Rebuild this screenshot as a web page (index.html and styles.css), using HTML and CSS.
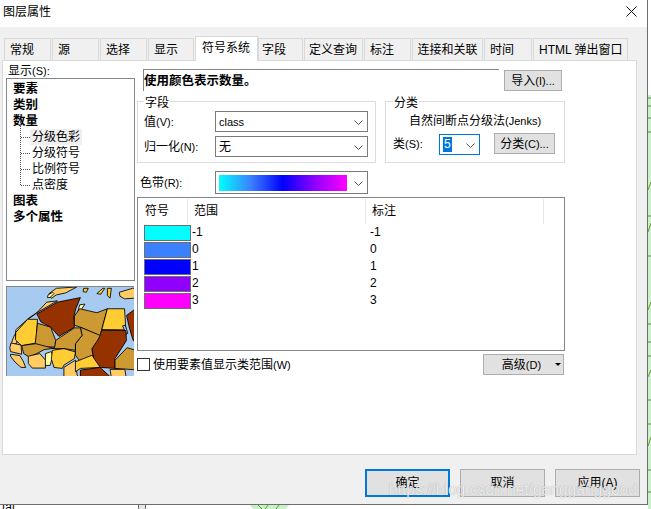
FILE: index.html
```html
<!DOCTYPE html>
<html lang="zh">
<head>
<meta charset="utf-8">
<title>图层属性</title>
<link rel="stylesheet" href="styles.css">
</head>
<body>
<div class="stage">
  <svg class="backdrop" width="651" height="509" viewBox="0 0 651 509">
    <rect x="648" y="95" width="3" height="414" fill="#c9f2cb"/>
    <path d="M648 98h3M648 106h3M648 118h3M648 132h3M648 216h3M648 256h3M648 324h3M648 342h3M648 356h3M648 400h3M648 424h3M648 470h3M648 492h3" stroke="#5f8a3a" fill="none"/>
    <path d="M648 190l3-8M648 232l3-9M648 310l3-8M648 377l3-7M648 446l3-9" stroke="#6f9a20" fill="none"/>
    <rect x="139" y="505" width="6" height="4" fill="#e8e8e8"/>
    <path d="M138.500 505v4M145.500 505v4" stroke="#666" fill="none"/>
    <path d="M250 505h39l-3 4h-33z" fill="#c9f2cb"/>
    <path d="M258 505l4 4M268 505l-3 4M279 505l-3 4" stroke="#5f9a20" fill="none"/>
    <text x="2" y="511" class="peek">tal</text>
  </svg>

  <div class="window">
    <header class="titlebar">
      <span class="title">图层属性</span>
      <svg class="close" width="11" height="11" viewBox="0 0 11 11"><path d="M0.500 0.500l10 10M10.500 0.500l-10 10" stroke="#111" fill="none"/></svg>
    </header>

    <nav class="tabs">
      <div class="tab w47">常规</div>
      <div class="tab w47">源</div>
      <div class="tab w47">选择</div>
      <div class="tab w46">显示</div>
      <div class="tab active">符号系统</div>
      <div class="tab w45">字段</div>
      <div class="tab w59">定义查询</div>
      <div class="tab w47">标注</div>
      <div class="tab w71">连接和关联</div>
      <div class="tab w48">时间</div>
      <div class="tab w94">HTML 弹出窗口</div>
    </nav>

    <main class="panel">
      <section class="left">
        <div class="show-label">显示<span class="lat">(S):</span></div>
        <div class="tree">
          <div class="node strong">要素</div>
          <div class="node strong">类别</div>
          <div class="node strong">数量</div>
          <div class="subtree">
            <div class="node sub"><span class="selected">分级色彩</span></div>
            <div class="node sub">分级符号</div>
            <div class="node sub">比例符号</div>
            <div class="node sub">点密度</div>
          </div>
          <div class="node strong">图表</div>
          <div class="node strong">多个属性</div>
        </div>
        <svg class="map" width="128" height="90" viewBox="0 0 128 90">
          <g transform="translate(-6 -6) scale(.3333)" stroke="#000" stroke-width="2.600" stroke-linejoin="round" shape-rendering="crispEdges">
            <rect x="0" y="0" width="420" height="300" fill="#a6caf0" stroke="none"/>
            <path fill="#ffcc66" d="M145 38l22-16 62-4-34 18-28 6-14 10-6-4z"/>
            <path fill="#ffff99" d="M142 42l14-8 4 4-12 12-8 0z"/>
            <path fill="#ffcc66" d="M358 34l40-12 22 0 0 36-18-6-28 2-14-8z"/>
            <path fill="#ffcc33" d="M250 22l14 0-6 12-10-2zM290 38l18-16 6 0-12 18zM322 22l12 0-4 30-8-8z"/>
            <path fill="#ffcc66" d="M28 196l10-28 8-14 34-38 24-16 34-36 32-4-62 36-24 16-40 36 0 24 4 16z"/>
            <path fill="#ffcc33" d="M44 156l36-40 30 0-5 72-44 8-18-18z"/>
            <path fill="#963200" d="M108 100l62-36 70-14-14 34-6 26 2 30-47 28-25-28-30-16z"/>
            <path fill="#ffff99" d="M226 116l12-44 16-2-14 20-8 22z"/>
            <path fill="#cc9933" d="M222 106l16-22 52 12 32-12-17 62-5 20-60-26-18-6z"/>
            <path fill="#ffcc33" d="M322 84l52 0 4 64-73-1z"/>
            <path fill="#a6caf0" d="M368 136l8-2 8 24-4 4z"/>
            <path fill="#963200" d="M380 104l22-16 18 0 0 112-20-20-12-40z"/>
            <path fill="#963200" d="M305 150l73 0 2 30-35 55 0 30-45-3-20-22-5-40 20-25z"/>
            <path fill="#cc9933" d="M240 140l60 25-8 15-17 25 5 35-40 5-15-20 0-35 20-25z"/>
            <path fill="#cc9933" d="M165 180l57-38 18 0 5 23-20 25 0 20-35-5-30 0z"/>
            <path fill="#cc9933" d="M110 128l40 12 15 40-3 20-57 0-2-10z"/>
            <path fill="#cc9933" d="M62 196l43-6 30 8 25 6-30 4-22 12-24 10-16-10z"/>
            <path fill="#ffcc66" d="M30 188l30 6 2 28-34-8-2-12z"/>
            <path fill="#ffcc66" d="M28 222l28 4 10 16 8 20-14 0-18-16-14-18z"/>
            <path fill="#ffcc66" d="M82 228l35-8 17 20 0 24-40 0-12-14z"/>
            <path fill="#ffff99" d="M134 220l18-6 4 14-8 28-14 0z"/>
            <path fill="#ffcc33" d="M155 210l35-5 35 10-3 20-32 20-5 10-25-3-8-25z"/>
            <path fill="#ffcc66" d="M190 262l35-22 5 45 10 15-50 0z"/>
            <path fill="#ffcc33" d="M225 245l50-20 25 37-60 3-15 10z"/>
            <path fill="#cc9933" d="M345 265l0-25 37-38 38 12 0 56z"/>
            <path fill="#963200" d="M240 270l60-8 30 28-5 10-85 0z"/>
            <path fill="#ffcc66" d="M330 268l45 0 5 32-45 0z"/>
          </g>
        </svg>
      </section>

      <section class="right">
        <div class="desc-row">
          <div class="desc">使用颜色表示数量。</div>
          <button class="btn import">导入<span class="lat">(I)...</span></button>
        </div>

        <div class="groups">
          <div class="group fields">
            <span class="legend">字段</span>
            <div class="field">
              <label class="field-label">值<span class="lat">(V):</span></label>
              <div class="select wide"><span class="lat">class</span><svg class="chev" width="9" height="5" viewBox="0 0 9 5"><path d="M0.500 0.500l4 4 4-4" stroke="#555" fill="none"/></svg></div>
            </div>
            <div class="field">
              <label class="field-label">归一化<span class="lat">(N):</span></label>
              <div class="select wide"><span>无</span><svg class="chev" width="9" height="5" viewBox="0 0 9 5"><path d="M0.500 0.500l4 4 4-4" stroke="#555" fill="none"/></svg></div>
            </div>
          </div>

          <div class="group classify">
            <span class="legend">分类</span>
            <div class="method">自然间断点分级法<span class="lat">(Jenks)</span></div>
            <div class="class-row">
              <label class="class-label">类<span class="lat">(S):</span></label>
              <div class="select focus"><span class="hilite">5</span><svg class="chev" width="9" height="5" viewBox="0 0 9 5"><path d="M0.500 0.500l4 4 4-4" stroke="#555" fill="none"/></svg></div>
              <button class="btn classify-btn">分类<span class="lat">(C)...</span></button>
            </div>
          </div>
        </div>

        <div class="ramp-row">
          <label class="ramp-label">色带<span class="lat">(R):</span></label>
          <div class="select ramp"><div class="gradient"></div><svg class="chev" width="9" height="5" viewBox="0 0 9 5"><path d="M0.500 0.500l4 4 4-4" stroke="#555" fill="none"/></svg></div>
        </div>

        <div class="table">
          <div class="thead">
            <div class="th c1">符号</div>
            <div class="th c2">范围</div>
            <div class="th c3">标注</div>
            <div class="th c4"></div>
          </div>
          <div class="trow"><div class="swatch s1"></div><div class="c-range">-1</div><div class="c-label">-1</div></div>
          <div class="trow"><div class="swatch s2"></div><div class="c-range">0</div><div class="c-label">0</div></div>
          <div class="trow"><div class="swatch s3"></div><div class="c-range">1</div><div class="c-label">1</div></div>
          <div class="trow"><div class="swatch s4"></div><div class="c-range">2</div><div class="c-label">2</div></div>
          <div class="trow"><div class="swatch s5"></div><div class="c-range">3</div><div class="c-label">3</div></div>
        </div>

        <div class="options">
          <div class="check"></div>
          <span class="check-text">使用要素值显示类范围<span class="lat">(W)</span></span>
          <button class="btn advanced"><span>高级<span class="lat">(D)</span></span><i class="caret"></i></button>
        </div>
      </section>
    </main>

    <footer class="footer">
      <button class="btn action default">确定</button>
      <button class="btn action">取消</button>
      <button class="btn action">应用(A)</button>
    </footer>
  </div>

  <div class="watermark">https://blog.csdn.net/gangganggood</div>
</div>
</body>
</html>
```

FILE: styles.css
```css
* { box-sizing: border-box; }

html, body { margin: 0; padding: 0; }

body {
  width: 651px;
  height: 509px;
  overflow: hidden;
  background: #fff;
  color: #000;
  font: 12px/16px "Liberation Sans", "Noto Sans CJK SC", sans-serif;
}

.lat { font-size: 11px; }

.stage { position: relative; width: 651px; height: 509px; overflow: hidden; }
.backdrop { position: absolute; left: 0; top: 0; }
.peek { font-size: 12px; fill: #000; }

.window {
  position: relative;
  width: 648px;
  height: 505px;
  background: #f0f0f0;
  border-right: 1px solid #6e6e6e;
  border-bottom: 1px solid #6e6e6e;
}

.titlebar {
  height: 27px;
  background: #fff;
  display: flex;
  align-items: center;
  justify-content: space-between;
  padding: 0 10px 5px 3px;
}

.title { padding-top: 2px; }

.tabs {
  display: flex;
  align-items: flex-end;
  height: 25px;
  margin-top: 9px;
  margin-bottom: -1px;
  padding-left: 4px;
  position: relative;
  z-index: 1;
}

.tab {
  height: 22px;
  margin-right: 1px;
  margin-bottom: 1px;
  background: #f0f0f0;
  border: 1px solid #d9d9d9;
  border-bottom: 0;
  padding-left: 5px;
  line-height: 23px;
  white-space: nowrap;
}

.w45 { width: 45px; padding-left: 3px; }
.w46 { width: 46px; }
.w47 { width: 47px; }
.w48 { width: 48px; }
.w59 { width: 59px; padding-left: 4px; }
.w71 { width: 71px; padding-left: 0; text-align: center; }
.w94 { width: 95px; padding-left: 5px; }

.active {
  width: 63px;
  height: 25px;
  margin-right: 0;
  margin-bottom: 0;
  background: #fff;
  padding-left: 6px;
  line-height: 22px;
  border-color: #d9d9d9;
}

.panel {
  display: flex;
  gap: 2px;
  width: 635px;
  height: 395px;
  margin-left: 2px;
  padding: 1px 0 0 3px;
  background: #fff;
  border: 1px solid #d9d9d9;
}

.left { width: 129px; }
.show-label { height: 16px; padding: 1px 0 0 2px; }

.tree {
  height: 203px;
  border: 1px solid #82868d;
  padding: 2px 0 0 6px;
}

.node { height: 16px; white-space: nowrap; }
.strong { font-weight: 700; font-size: 12.500px; }

.subtree { position: relative; }
.subtree::before {
  content: "";
  position: absolute;
  left: 7px;
  top: -8px;
  bottom: 8px;
  border-left: 1px dotted #555;
}

.sub { position: relative; padding-left: 19px; }
.sub::before {
  content: "";
  position: absolute;
  left: 8px;
  top: 8px;
  width: 9px;
  border-top: 1px dotted #555;
}

.selected { display: inline-block; margin-left: -2px; padding: 0 2px; background: #f0f0f0; }

.map {
  display: block;
  margin-top: 5px;
  border: 0;
  border-top: 1px solid #82868d;
  border-left: 1px solid #82868d;
}

.right { width: 428px; }

.desc-row {
  display: flex;
  gap: 5px;
  height: 22px;
  margin-top: 7px;
  padding-left: 6px;
}

.desc {
  width: 356px;
  height: 22px;
  border-top: 1px solid #82868d;
  border-left: 1px solid #82868d;
  padding-left: 0;
  line-height: 22px;
  font-weight: 700;
  font-size: 12.500px;
}

.btn {
  margin: 0;
  padding: 0;
  background: #e1e1e1;
  border: 1px solid #adadad;
  color: #000;
  font: inherit;
  line-height: 16px;
}

.import { width: 58px; height: 21px; margin-top: 1px; }

.groups { display: flex; gap: 9px; margin-top: 10px; }

.group {
  position: relative;
  height: 62px;
  border: 1px solid #dcdcdc;
}

.legend {
  position: absolute;
  left: 7px;
  top: -7px;
  padding: 0 1px;
  background: #fff;
}

.fields .legend { left: 6px; }

.fields { width: 239px; padding: 9px 0 0 6px; }
.field { display: flex; align-items: center; height: 21px; margin-bottom: 4px; }
.field-label { width: 71px; white-space: nowrap; }

.select {
  position: relative;
  display: flex;
  align-items: center;
  background: #fff;
  border: 1px solid #7a7a7a;
  padding-left: 3px;
}

.chev { position: absolute; right: 4px; top: 50%; margin-top: -2px; }
.wide { width: 153px; height: 21px; }

.classify { width: 180px; padding: 11px 0 0 7px; }
.method { margin-left: 16px; height: 16px; white-space: nowrap; }
.class-row { display: flex; align-items: flex-start; margin-top: 5px; }
.class-label { width: 46px; line-height: 21px; }
.focus { width: 41px; height: 21px; border-color: #0078d7; }
.hilite { background: #0078d7; color: #fff; padding: 0 1px; line-height: 15px; }
.classify-btn { width: 61px; height: 21px; margin: -1px 0 0 14px; }

.ramp-row { display: flex; align-items: center; height: 23px; margin-top: 8px; padding-left: 3px; }
.ramp-label { width: 75px; }
.ramp { width: 153px; height: 23px; }
.gradient {
  width: 128px;
  height: 16px;
  background: linear-gradient(90deg, #00ffff 0%, #3b80ff 25%, #0000ff 50%, #9000ff 75%, #ff00ff 100%);
}

.table {
  height: 154px;
  margin-top: 3px;
  border: 1px solid #82868d;
  padding-top: 1px;
}

.thead { display: flex; height: 25px; line-height: 24px; }
.th { border-right: 1px solid #e8e8e8; padding-left: 7px; }
.c1 { width: 50px; }
.c2 { width: 178px; padding-left: 6px; }
.c3 { width: 178px; padding-left: 6px; }
.c4 { width: 20px; border-right: 0; }

.trow { display: flex; align-items: center; height: 17px; padding-left: 6px; line-height: 17px; }

.swatch { width: 47px; height: 16px; border: 1px solid #6e6e6e; }
.s1 { background: #00ffff; }
.s2 { background: #3b80ff; }
.s3 { background: #0000ff; }
.s4 { background: #9000ff; }
.s5 { background: #ff00ff; }

.c-range { width: 178px; padding-left: 1px; }
.c-label { padding-left: 1px; }

.options { display: flex; align-items: center; height: 21px; margin-top: 3px; }

.check {
  width: 13px;
  height: 13px;
  background: #fff;
  border: 1px solid #333;
}

.check-text { margin-left: 3px; }

.advanced {
  position: relative;
  width: 81px;
  height: 21px;
  margin-left: auto;
  margin-right: 1px;
  padding-right: 4px;
}

.caret {
  position: absolute;
  right: 2px;
  top: 8px;
  width: 0;
  height: 0;
  border-left: 3px solid transparent;
  border-right: 3px solid transparent;
  border-top: 3px solid #000;
}

.footer {
  display: flex;
  justify-content: flex-end;
  gap: 10px;
  margin-top: 14px;
  padding-right: 7px;
}

.action { width: 85px; height: 28px; }
.default { border: 2px solid #0078d7; }

.watermark {
  position: absolute;
  left: 389px;
  top: 480px;
  color: rgba(255, 255, 255, .82);
  font-size: 15.600px;
  line-height: 20px;
  white-space: nowrap;
  text-shadow: 0 0 1px rgba(70, 70, 70, .5);
}
```
